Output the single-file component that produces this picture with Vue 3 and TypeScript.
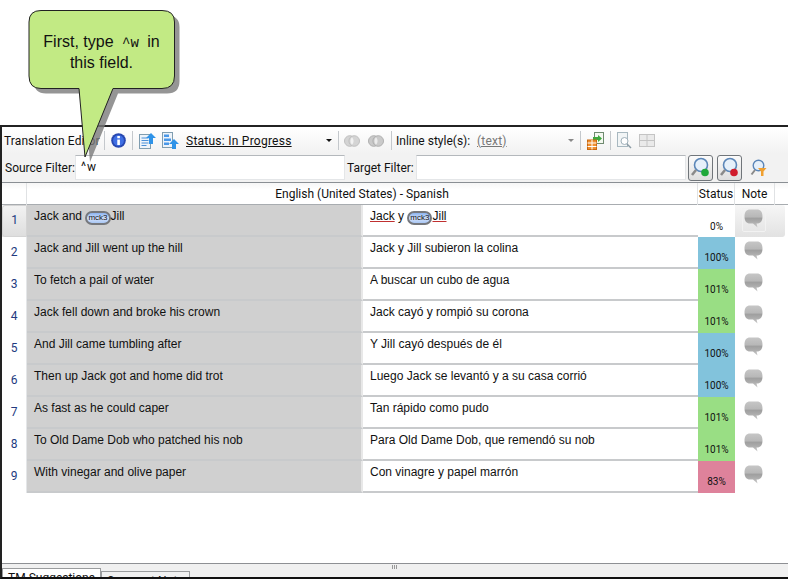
<template>
  <div class="page">
    <div class="window">
      <div class="toolbar-row">
        <span class="title">Translation Editor</span>
        <span class="sep sep-a"></span>
        <svg class="ico info" width="15" height="15" viewBox="0 0 16 16">
          <circle cx="8" cy="8" r="7.8" fill="#2747b0" />
          <circle cx="8" cy="8" r="5.8" fill="#3f6fe4" />
          <rect x="6.7" y="7" width="2.8" height="5.8" fill="#fff" />
          <rect x="6.7" y="3.2" width="2.8" height="2.4" fill="#fff" />
        </svg>
        <span class="sep"></span>
        <svg class="ico" width="17" height="17" viewBox="0 0 17 17">
          <rect x="0.5" y="2.5" width="11" height="14" fill="#eef4fa" stroke="#7f9db0" />
          <path d="M2.5 6h7M2.5 8.500h7M2.5 11h7M2.5 13.500h5" stroke="#4a90d8" />
          <path d="M12 1l5 5h-3v6h-4V6H7z" fill="#2f93e8" />
        </svg>
        <svg class="ico ico-b" width="17" height="17" viewBox="0 0 17 17">
          <rect x="0.5" y="0.5" width="10" height="15" fill="#eef4fa" stroke="#7f9db0" />
          <rect x="2" y="2.5" width="5" height="2.5" fill="#4a98e8" />
          <rect x="2" y="6.5" width="7" height="2.5" fill="#4a98e8" />
          <rect x="2" y="10.5" width="5" height="2.5" fill="#4a98e8" />
          <path d="M12 7l5 5h-3v5h-4v-5H7z" fill="#2f93e8" />
        </svg>
        <span class="status-link">Status: In Progress</span>
        <span class="caret caret-a"></span>
        <span class="sep sep-b"></span>
        <svg class="ico rings" width="16" height="14" viewBox="0 0 16 14">
          <circle cx="5.8" cy="7" r="5.3" fill="#d4d4d4" stroke="#c0c0c0" />
          <circle cx="10.2" cy="7" r="5.3" fill="#d4d4d4" stroke="#c0c0c0" />
          <path d="M8 3.200a5.300 5.300 0 0 1 0 7.600a5.300 5.300 0 0 1 0-7.600z" fill="#f2f2f2" />
        </svg>
        <svg class="ico rings rings-b" width="16" height="14" viewBox="0 0 16 14">
          <circle cx="5.8" cy="7" r="5.3" fill="#cacaca" stroke="#b0b0b0" />
          <circle cx="10.2" cy="7" r="5.3" fill="#cacaca" stroke="#b0b0b0" />
          <path d="M8 3.200a5.300 5.300 0 0 1 0 7.600a5.300 5.300 0 0 1 0-7.600z" fill="#ececec" />
        </svg>
        <span class="sep sep-c"></span>
        <span class="inline-label">Inline style(s):</span>
        <span class="inline-value">(text)</span>
        <span class="caret caret-b"></span>
        <span class="sep sep-d"></span>
        <svg class="ico" width="18" height="18" viewBox="0 0 18 18">
          <rect x="7.5" y="0.5" width="9" height="11" fill="#f4f8f0" stroke="#6f8a70" />
          <path d="M6 5h5V3l4 3.500-4 3.500V8H6z" fill="#3ea83e" />
          <rect x="0.5" y="8" width="9" height="9.5" fill="#f09030" stroke="#c86810" />
          <path d="M0.500 11h9M0.500 14.500h9M5 8v9.500" stroke="#fff" />
        </svg>
        <span class="sep sep-e"></span>
        <svg class="ico" width="15" height="17" viewBox="0 0 15 17">
          <rect x="0.5" y="0.5" width="10" height="14" fill="#f2f5f6" stroke="#a8b8c0" />
          <circle cx="7.5" cy="9" r="3.5" fill="#fff" stroke="#a0b0ba" />
          <path d="M10 12l4 4" stroke="#8a9aa4" stroke-width="1.4" />
        </svg>
        <svg class="ico grid-ico" width="16" height="13" viewBox="0 0 16 13">
          <rect x="0.5" y="0.5" width="15" height="12" fill="#eaeaea" stroke="#c4c4c4" />
          <path d="M8 .5v12M.5 6.500h15" stroke="#c4c4c4" />
        </svg>
      </div>

      <div class="toolbar-row filter-row">
        <label class="filter-label">Source Filter:</label>
        <div class="filter-input source-input">^w</div>
        <label class="filter-label target-label">Target Filter:</label>
        <div class="filter-input"></div>
        <button class="find-btn">
          <svg width="21" height="22" viewBox="0 0 21 22">
            <circle cx="11" cy="8" r="6.5" fill="#e6f0fa" stroke="#5b86b8" stroke-width="1.6" />
            <path d="M6 13l-4 5" stroke="#8a8a8a" stroke-width="2.6" />
            <circle cx="15" cy="15.5" r="3.8" fill="#1fa83a" />
          </svg>
        </button>
        <button class="find-btn red">
          <svg width="21" height="22" viewBox="0 0 21 22">
            <circle cx="11" cy="8" r="6.5" fill="#e6f0fa" stroke="#5b86b8" stroke-width="1.6" />
            <path d="M6 13l-4 5" stroke="#8a8a8a" stroke-width="2.6" />
            <circle cx="15" cy="15.5" r="3.8" fill="#d01c2c" />
          </svg>
        </button>
        <svg class="funnel" width="17" height="18" viewBox="0 0 17 18">
          <circle cx="8.5" cy="6.5" r="5.3" fill="#e6f0fa" stroke="#5b86b8" stroke-width="1.4" />
          <path d="M5 11l-3.500 4.500" stroke="#8a8a8a" stroke-width="2" />
          <path d="M8 9h8.500l-3 3.500V17h-2.500v-4.500z" fill="#f0a030" />
        </svg>
      </div>

      <div class="grid">
        <div class="grid-head">
          <div class="head-num"></div>
          <div class="head-lang">English (United States) - Spanish</div>
          <div class="head-status">Status</div>
          <div class="head-note">Note</div>
        </div>

        <div
          v-for="(row, i) in rows"
          :key="i"
          class="grid-row"
          :class="{ active: i === 0 }"
        >
          <div class="cell-num">{{ i + 1 }}</div>
          <div class="cell-source">
            <template v-if="i === 0">Jack and <span class="tag">mck3</span>Jill</template>
            <template v-else>{{ row.source }}</template>
          </div>
          <div class="cell-target">
            <template v-if="i === 0">
              <span class="spell">Jack</span> y <span class="tag">mck3</span><span class="spell">Jill</span>
            </template>
            <template v-else>{{ row.target }}</template>
          </div>
          <div class="cell-status" :class="row.kind">{{ row.status }}</div>
          <div class="cell-note">
            <span class="note-box">
              <svg width="19" height="19" viewBox="0 0 19 19">
                <defs>
                  <linearGradient :id="`bubble${i}`" x1="0" y1="0" x2="0" y2="1">
                    <stop offset="0" stop-color="#c6c6c6" />
                    <stop offset="0.4" stop-color="#b8b8b8" />
                    <stop offset="0.5" stop-color="#a0a0a0" />
                    <stop offset="0.7" stop-color="#acacac" />
                    <stop offset="1" stop-color="#cacaca" />
                  </linearGradient>
                </defs>
                <path
                  d="M6 .5h7c3.500 0 5.500 2.500 5.500 7S16.500 14.500 13 14.500h-.5l1 4-4.500-4H6C2.500 14.500 .5 12 .5 7.500S2.500 .5 6 .5z"
                  :fill="`url(#bubble${i})`"
                />
              </svg>
            </span>
          </div>
        </div>
      </div>

      <div class="bottom">
        <div class="grip"></div>
        <div class="tabs">
          <span class="tab on">TM Suggestions</span>
          <span class="tab second">Segment Note</span>
        </div>
      </div>
    </div>

    <svg class="callout" width="190" height="175" viewBox="0 0 190 175">
      <path class="callout-shadow" :d="calloutPath" transform="translate(5 5)" />
      <path class="callout-body" :d="calloutPath" />
    </svg>
    <div class="callout-text">First, type <span class="code">^w</span> in<br />this field.</div>
  </div>
</template>

<script setup lang="ts">
type Kind = 'none' | 'exact' | 'plus' | 'fuzzy'

interface Row {
  source: string
  target: string
  status: string
  kind: Kind
}

const calloutPath =
  'M41 10.500H162Q174.500 10.500 174.500 22V76Q174.500 88.500 162 88.500H113L85 157L79 88.500H41Q29 88.500 29 76V22Q29 10.500 41 10.500Z'

const rows: Row[] = [
  { source: 'Jack and Jill', target: 'Jack y Jill', status: '0%', kind: 'none' },
  { source: 'Jack and Jill went up the hill', target: 'Jack y Jill subieron la colina', status: '100%', kind: 'exact' },
  { source: 'To fetch a pail of water', target: 'A buscar un cubo de agua', status: '101%', kind: 'plus' },
  { source: 'Jack fell down and broke his crown', target: 'Jack cayó y rompió su corona', status: '101%', kind: 'plus' },
  { source: 'And Jill came tumbling after', target: 'Y Jill cayó después de él', status: '100%', kind: 'exact' },
  { source: 'Then up Jack got and home did trot', target: 'Luego Jack se levantó y a su casa corrió', status: '100%', kind: 'exact' },
  { source: 'As fast as he could caper', target: 'Tan rápido como pudo', status: '101%', kind: 'plus' },
  { source: 'To Old Dame Dob who patched his nob', target: 'Para Old Dame Dob, que remendó su nob', status: '101%', kind: 'plus' },
  { source: 'With vinegar and olive paper', target: 'Con vinagre y papel marrón', status: '83%', kind: 'fuzzy' },
]
</script>

<style>
html,
body {
  margin: 0;
  background: #fff;
  overflow: hidden;
}
</style>

<style scoped>
.page {
  position: relative;
  width: 788px;
  height: 579px;
  padding-top: 125px;
  box-sizing: border-box;
  overflow: hidden;
  font-family: Roboto, sans-serif;
  color: #111;
}

.window {
  height: 454px;
  box-sizing: border-box;
  border-top: 2px solid #222;
  border-left: 2px solid #222;
  border-bottom: 2px solid #111;
  display: flex;
  flex-direction: column;
  background: #fff;
}

.toolbar-row {
  height: 27px;
  flex: none;
  display: flex;
  align-items: center;
  padding-left: 2px;
  background: linear-gradient(#fff, #f2f2f2);
  font-size: 12px;
}

.filter-row {
  background: #f2f2f2;
  padding-left: 3px;
  border-bottom: 1px solid #8a8f94;
  height: 29px;
  padding-bottom: 1px;
  box-sizing: border-box;
}

.title {
  width: 98px;
  white-space: nowrap;
  letter-spacing: 0.1px;
}

.sep {
  width: 1px;
  height: 19px;
  background: #c4c8cc;
  flex: none;
}

.sep-a {
  margin-left: 2px;
}

.ico {
  flex: none;
}

.info {
  margin: 0 6px;
}

.ico-b {
  margin-left: 6px;
}

.sep + .ico:not(.info) {
  margin-left: 6px;
}

.status-link {
  margin-left: 7px;
  width: 139px;
  text-decoration: underline;
  white-space: nowrap;
  letter-spacing: 0.25px;
}

.caret {
  width: 0;
  height: 0;
  margin: 0 1px;
  border-left: 3px solid transparent;
  border-right: 3px solid transparent;
  border-top: 3px solid #111;
  flex: none;
}

.sep-b {
  margin-left: 5px;
}

.rings {
  margin-left: 5px !important;
}

.rings-b {
  margin-left: 8px !important;
}

.sep-c {
  margin-left: 7px;
}

.inline-label {
  margin-left: 4px;
  width: 72px;
  white-space: nowrap;
}

.inline-value {
  margin-left: 9px;
  width: 90px;
  color: #777;
  text-decoration: underline;
  letter-spacing: 0.2px;
}

.caret-b {
  border-top-color: #888;
}

.sep-d {
  margin-left: 5px;
}

.sep-e {
  margin-left: 5px;
}

.grid-ico {
  margin-left: 7px;
}

.filter-label {
  white-space: nowrap;
  width: 70px;
  flex: none;
}

.target-label {
  margin-left: 2px;
  width: 69px;
}

.filter-input {
  width: 270px;
  height: 25px;
  box-sizing: border-box;
  background: #fff;
  border: 1px solid #e4e6e8;
  border-top-color: #b4b8bc;
  padding-left: 5px;
  line-height: 22px;
  font-size: 12px;
  flex: none;
}

.source-input {
  letter-spacing: 1px;
}

.find-btn {
  width: 25px;
  height: 26px;
  padding: 0;
  margin-left: 2px;
  flex: none;
  display: flex;
  align-items: center;
  justify-content: center;
  background: linear-gradient(#fbfbfb, #dedede);
  border: 1px solid #70757a;
  border-radius: 3px;
}

.find-btn.red {
  margin-left: 4px;
}

.funnel {
  margin-left: 8px;
}

.grid {
  flex: 1;
  display: flex;
  flex-direction: column;
  min-height: 0;
}

.grid-head {
  display: grid;
  grid-template-columns: 25px 671px 37px 40px;
  height: 22px;
  flex: none;
  font-size: 12px;
  line-height: 22px;
  text-align: center;
  border-bottom: 1px solid #a8acb0;
  box-sizing: border-box;
  background: linear-gradient(#f6f6f6, #fff 30%);
}

.grid-head > div {
  border-right: 1px solid #e0e2e4;
}

.grid-row {
  display: grid;
  grid-template-columns: 25px 336px 335px 37px 50px;
  width: 783px;
  height: 32px;
  flex: none;
  font-family: 'Liberation Sans', Arial, sans-serif;
  font-size: 12px;
}

.grid-row.active {
  background: linear-gradient(#f6f6f6, #e2e2e2);
  border-radius: 0 3px 3px 0;
}

.cell-num {
  font-family: Roboto, sans-serif;
  color: #223a80;
  text-align: center;
  padding-top: 7px;
  line-height: 16px;
  border-right: 1px solid #e4e6e8;
}

.active .cell-num {
  background: linear-gradient(#f2f2f2, #dedede);
  border: 1px solid #d4d4d4;
  border-radius: 3px 0 0 3px;
  padding-top: 6px;
  box-sizing: border-box;
}

.cell-source,
.cell-target {
  padding: 4px 0 0 7px;
  line-height: 15px;
  white-space: nowrap;
  border-bottom: 2px solid #c8cacc;
  box-sizing: border-box;
}

.cell-source {
  background: #d0d0d0;
  border-right: 2px solid #e8e8e8;
}

.cell-target {
  background: #fff;
}

.tag {
  display: inline-block;
  height: 10px;
  line-height: 10px;
  padding: 0 1px;
  font-size: 8px;
  border: 2px solid #76787d;
  border-radius: 7px;
  background: linear-gradient(#8cb4f0, #d4e2fa 55%, #a8c6f4);
  vertical-align: 0;
}

.spell {
  text-decoration: underline;
  text-decoration-color: #c03030;
}

.cell-status {
  font-family: Roboto, sans-serif;
  font-size: 10px;
  text-align: center;
  line-height: 13px;
  padding-top: 14px;
  box-sizing: border-box;
}

.cell-status.none {
  background: #fff;
  padding-top: 15px;
}

.cell-status.exact {
  background: #82c3dc;
}

.cell-status.plus {
  background: #99de84;
}

.cell-status.fuzzy {
  background: #de829b;
}

.cell-note {
  padding: 3px 0 0 7px;
  box-sizing: border-box;
}

.note-box {
  display: block;
  width: 24px;
  height: 24px;
  padding: 1px 2px;
  box-sizing: border-box;
}

.active .note-box {
  border: 1px solid #f2f2f2;
  border-radius: 2px;
  padding: 0 1px;
}

.bottom {
  height: 14px;
  flex: none;
  margin-top: auto;
  position: relative;
  background: #f0f0f0;
  border-top: 1px solid #8e9094;
  box-sizing: border-box;
  overflow: hidden;
}

.grip {
  position: absolute;
  left: 390px;
  top: 1px;
  width: 6px;
  height: 4px;
  background: repeating-linear-gradient(90deg, #999 0 1px, transparent 1px 2px);
}

.tabs {
  display: flex;
  padding-top: 4px;
  font-size: 12px;
}

.tab {
  height: 20px;
  width: 89px;
  box-sizing: border-box;
  padding-top: 2px;
  text-align: center;
  border: 1px solid #9a9c9e;
  border-bottom: none;
  background: #f0f0f0;
  white-space: nowrap;
  margin-top: 3px;
}

.tab.on {
  width: 99px;
  background: #fff;
  margin-top: 0;
}

.callout {
  position: absolute;
  left: 0;
  top: 0;
  pointer-events: none;
}

.callout-shadow {
  fill: #7a7a7a;
  opacity: 0.8;
}

.callout-body {
  fill: #c2ea84;
  stroke: #222;
  stroke-width: 1;
}

.callout-text {
  position: absolute;
  left: 29px;
  top: 32px;
  width: 145px;
  text-align: center;
  font-family: 'Liberation Sans', Arial, sans-serif;
  font-size: 16px;
  line-height: 20px;
  color: #111;
}

.code {
  font-family: 'Liberation Mono', monospace;
  font-size: 14px;
  margin: 0 4px;
}
</style>
